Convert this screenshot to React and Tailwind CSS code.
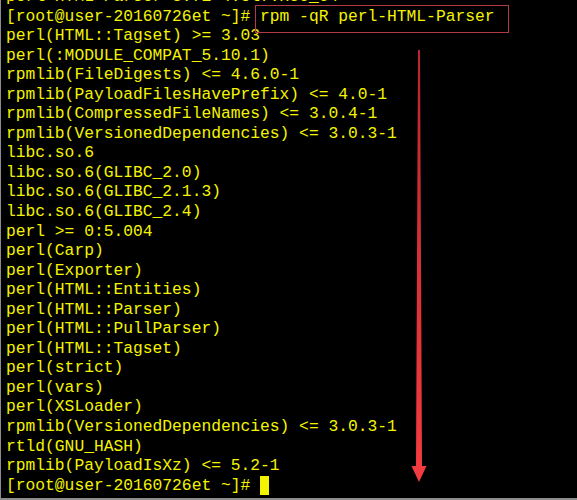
import React from "react";

const lines = [
  "perl-HTML-Parser-3.71-4.el7.x86_64",
  "[root@user-20160726et ~]# rpm -qR perl-HTML-Parser",
  "perl(HTML::Tagset) >= 3.03",
  "perl(:MODULE_COMPAT_5.10.1)",
  "rpmlib(FileDigests) <= 4.6.0-1",
  "rpmlib(PayloadFilesHavePrefix) <= 4.0-1",
  "rpmlib(CompressedFileNames) <= 3.0.4-1",
  "rpmlib(VersionedDependencies) <= 3.0.3-1",
  "libc.so.6",
  "libc.so.6(GLIBC_2.0)",
  "libc.so.6(GLIBC_2.1.3)",
  "libc.so.6(GLIBC_2.4)",
  "perl >= 0:5.004",
  "perl(Carp)",
  "perl(Exporter)",
  "perl(HTML::Entities)",
  "perl(HTML::Parser)",
  "perl(HTML::PullParser)",
  "perl(HTML::Tagset)",
  "perl(strict)",
  "perl(vars)",
  "perl(XSLoader)",
  "rpmlib(VersionedDependencies) <= 3.0.3-1",
  "rtld(GNU_HASH)",
  "rpmlib(PayloadIsXz) <= 5.2-1",
];

const Arrow = () => (
  <svg
    className="absolute left-[408px] top-[48px]"
    width="22"
    height="436"
    viewBox="0 0 22 436"
  >
    <defs>
      <linearGradient id="shaft" x1="0" y1="0" x2="0" y2="1">
        <stop offset="0" stopColor="#b8262e" />
        <stop offset="1" stopColor="#f43c40" />
      </linearGradient>
    </defs>
    <polygon
      points="9,2 11,2 13,418 17.5,418 10,434 2.5,418 7,418"
      fill="url(#shaft)"
    />
  </svg>
);

export default function App() {
  return (
    <div className="relative w-[577px] h-[500px] overflow-hidden bg-black border-l border-b-2 border-[#8c8c8c]">
      <div
        className="mt-[-13px] pl-[5px] text-[16.3px] leading-[19.54px] text-[#f4f400] whitespace-pre"
        style={{ fontFamily: '"Liberation Mono", "DejaVu Sans Mono", monospace' }}
      >
        {lines.map((line, i) => (
          <div key={i}>{line}</div>
        ))}
        <div className="flex items-center">
          <span>[root@user-20160726et ~]# </span>
          <span className="inline-block w-[9px] h-[19px] bg-[#f4f400]" />
        </div>
      </div>

      {/* highlight around command */}
      <div className="absolute left-[254px] top-[5px] w-[254px] h-[28px] border border-[#b33a40]" />

      <Arrow />
    </div>
  );
}
